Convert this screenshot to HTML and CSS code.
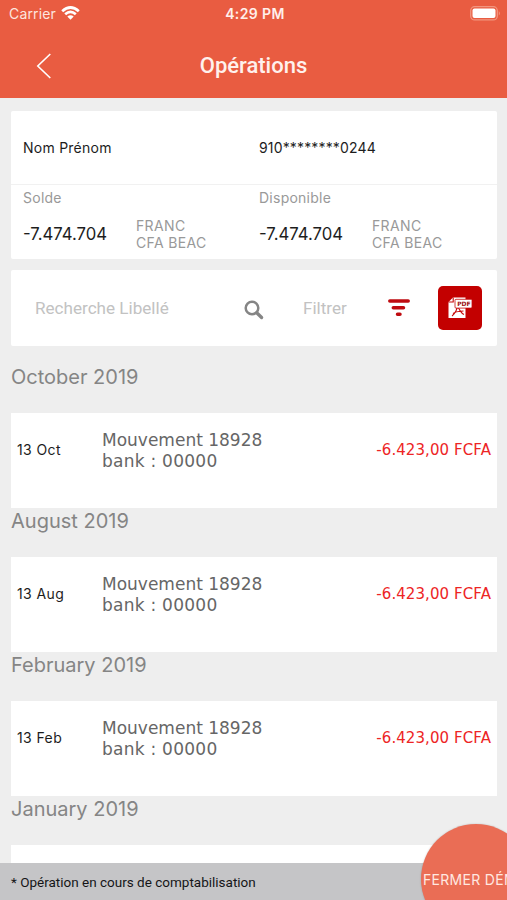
FILE: index.html
```html
<!DOCTYPE html>
<html lang="fr">
<head>
<meta charset="utf-8">
<title>Opérations</title>
<link rel="stylesheet" href="styles.css">
</head>
<body>
<div class="screen">
  <header class="header">
    <div class="status">
      <div class="carrier"><span>Carrier</span>
        <svg width="19" height="14" viewBox="0 0 19 14" fill="none" stroke="#fff" stroke-width="2.7"><path d="M1.2 5.2Q9.5 -2.2 17.8 5.2M4.2 8.3Q9.5 3.6 14.8 8.3"/><path d="M6.3 10.6Q9.5 7.9 12.7 10.6L9.5 13.8Z" fill="#fff" stroke="none"/></svg>
      </div>
      <span class="time">4:29 PM</span>
      <svg class="battery" width="31" height="15" viewBox="0 0 31 15"><rect x=".7" y=".7" width="26.6" height="13.2" rx="4" fill="none" stroke="#f2957f" stroke-width="1.3"/><rect x="2.5" y="2.5" width="23" height="9.6" rx="2" fill="#fff"/><path d="M28.8 5Q31 7.3 28.8 9.6Z" fill="#f2957f"/></svg>
    </div>
    <div class="navbar">
      <svg class="back" width="16" height="26" viewBox="0 0 16 26" fill="none" stroke="#fff" stroke-width="1.6"><path d="M14.3 1L1.8 13L14.3 25"/></svg>
      <h1>Opérations</h1>
    </div>
  </header>
  <main>
    <section class="card account">
      <div class="row identity"><span class="name">Nom Prénom</span><span class="number">910<span class="mask">********</span>0244</span></div>
      <div class="row balances">
        <div class="balance"><div class="label">Solde</div><div class="money"><strong>-7.474.704</strong><span class="currency">FRANC<br>CFA BEAC</span></div></div>
        <div class="balance"><div class="label">Disponible</div><div class="money"><strong>-7.474.704</strong><span class="currency">FRANC<br>CFA BEAC</span></div></div>
      </div>
    </section>
    <section class="card tools">
      <span class="search">Recherche Libellé</span>
      <svg class="lens" width="20" height="20" viewBox="0 0 20 20" fill="none" stroke="#858585"><circle cx="8" cy="8" r="6.3" stroke-width="2.5"/><path d="M12.7 12.7L17.6 17.5" stroke-width="3.3" stroke-linecap="round"/></svg>
      <span class="filter">Filtrer</span>
      <svg class="funnel" width="24" height="20" viewBox="0 0 24 20" stroke="#bf0b10" stroke-width="3.5" stroke-linecap="round"><path d="M2.8 3H21.2M6.3 9.7H16.5M10.5 16.2H13"/></svg>
      <span class="pdf">
        <svg width="26" height="24" viewBox="0 0 26 24"><path d="M1.5 6L6 1.5H18.5V22H1.5Z" fill="#fff"/><path d="M6.2 1.5V6H1.5M5 20C8 18 11 12 10.3 8.5C12 14 14 17 17 18.5M6 17.5C10 14.5 13 15.5 16.5 15" fill="none" stroke="#c50a0a" stroke-width="1.1"/><rect x="8" y="3.3" width="17" height="8.8" rx="1" fill="#fff" stroke="#c50a0a" stroke-width=".8"/><text x="10.2" y="9.9">PDF</text></svg>
      </span>
    </section>
    <h2 class="first">October 2019</h2>
    <article class="operation"><time>13 Oct</time><p>Mouvement 18928<br><span class="bank">bank : 00000</span></p><span class="amount">-6.423,00 FCFA</span></article>
    <h2>August 2019</h2>
    <article class="operation"><time>13 Aug</time><p>Mouvement 18928<br><span class="bank">bank : 00000</span></p><span class="amount">-6.423,00 FCFA</span></article>
    <h2>February 2019</h2>
    <article class="operation"><time>13 Feb</time><p>Mouvement 18928<br><span class="bank">bank : 00000</span></p><span class="amount">-6.423,00 FCFA</span></article>
    <h2>January 2019</h2>
    <article class="operation"></article>
  </main>
  <footer>* Opération en cours de comptabilisation</footer>
  <div class="close"><span>FERMER DÉMO</span></div>
</div>
</body>
</html>
```
FILE: styles.css
```css
* { box-sizing: border-box; }
body { margin: 0; background: #eee; font-family: Inter, "Liberation Sans", sans-serif; color: #1d1d1d; }
.screen { position: relative; width: 507px; height: 900px; overflow: hidden; background: #eee; }
svg { display: block; flex: none; }
span, strong, time { white-space: nowrap; }
.header { height: 98px; background: #e95c41; color: #fff; }
.status { height: 27px; display: grid; grid-template-columns: 1fr auto 1fr; align-items: center; padding: 0 6px 0 9px; }
.carrier { display: flex; gap: 6px; align-items: center; font-size: 14px; letter-spacing: .15px; color: #fde5df; }
.carrier svg { margin-top: -2px; margin-left: -1px; }
.time { font-size: 14px; font-weight: 600; letter-spacing: .4px; color: #ffefeb; }
.battery { justify-self: end; }
.navbar { height: 71px; display: grid; grid-template-columns: 1fr auto 1fr; align-items: center; padding: 0 36px; }
.back { margin-bottom: -7px; }
h1 { margin: 6px 0 0; font: 500 22px/26px Roboto, sans-serif; color: #fff1ed; }
main { padding: 13px 10px 0 11px; }
.card { background: #fff; border-radius: 2px; }
.account { height: 148px; }
.row { display: grid; grid-template-columns: 236px 1fr; padding-left: 12px; }
.identity { height: 74px; align-items: center; border-bottom: 1px solid #f1f1f1; font-size: 14px; letter-spacing: .25px; }
.number { display: flex; letter-spacing: .15px; }
.label { color: #999; font-size: 14px; line-height: 18px; margin-top: 4px; letter-spacing: .25px; }
.money { display: flex; align-items: center; margin-top: 10px; }
.money strong { width: 113px; font-size: 16.7px; font-weight: 400; line-height: 20px; }
.currency { color: #999; font-size: 14px; line-height: 17px; letter-spacing: .35px; }
.tools { height: 76px; margin-top: 11px; display: flex; align-items: center; padding-left: 24px; color: #c2c2c2; font: 17.1px/20px Roboto, sans-serif; }
.search { width: 209px; }
.lens { margin: 3px 39px 0 0; }
.filter { width: 84px; }
.pdf { width: 44px; height: 44px; margin-left: 27px; border-radius: 5px; background: #c30000; display: grid; place-items: center; }
.pdf text { font: 700 6px "DejaVu Sans", sans-serif; fill: #9b1010; }
h2 { margin: 0; height: 49px; font-size: 20px; line-height: 26px; font-weight: 400; color: #858585; }
h2.first { height: 67px; padding-top: 18px; }
.operation { height: 95px; background: #fff; display: flex; align-items: flex-start; padding: 16px 6px 0; }
time { width: 85px; margin-top: 12px; font-size: 14px; line-height: 17px; letter-spacing: .4px; }
p { margin: 1px 0 0; flex: 1; font: 17px/21px "DejaVu Sans", sans-serif; color: #666; }
.bank { letter-spacing: .25px; }
.amount { margin-top: 11px; font: 15px/20px "DejaVu Sans", sans-serif; letter-spacing: .08px; color: #ed2525; }
footer { position: absolute; left: 0; right: 0; bottom: 0; height: 37px; padding-left: 11px; background: #c5c5c7; font: 400 13.5px/38px Roboto, sans-serif; color: #151517; }
.close { position: absolute; left: 421px; top: 824px; width: 110px; height: 110px; border-radius: 50%; background: #ea6d55; display: flex; align-items: center; padding-left: 2px; color: #ffe8e1; font-size: 14px; letter-spacing: .3px; box-shadow: 0 0 2px #0003; }
```
